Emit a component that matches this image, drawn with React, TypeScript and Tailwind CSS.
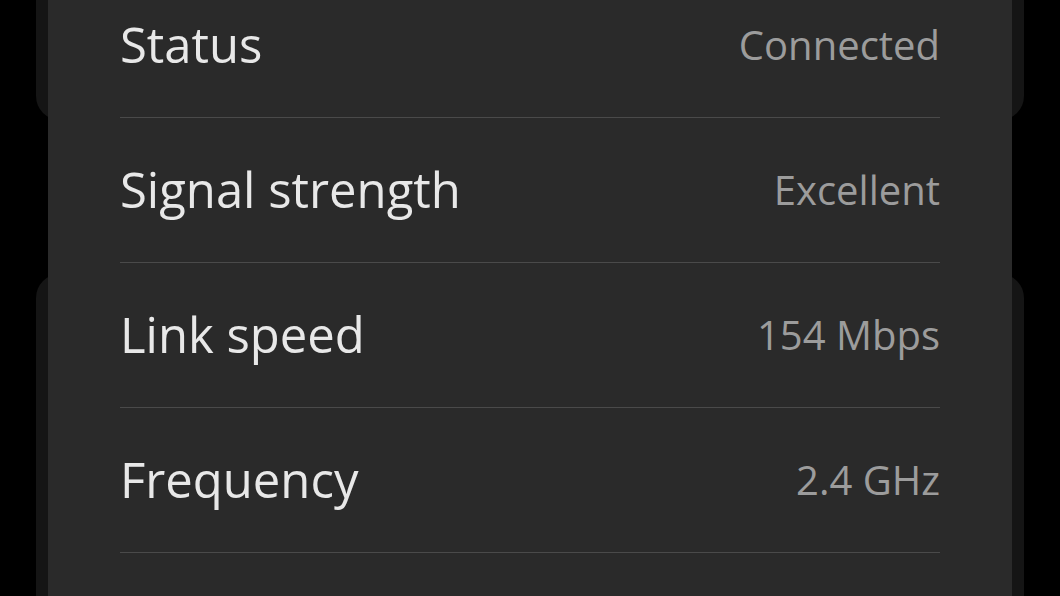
import React from 'react'

const rows = [
  { label: 'Status', value: 'Connected' },
  { label: 'Signal strength', value: 'Excellent' },
  { label: 'Link speed', value: '154 Mbps' },
  { label: 'Frequency', value: '2.4 GHz' },
]

const App = () => {
  return (
    <div className="relative h-[596px] w-[1060px] overflow-hidden bg-black" style={{ fontFamily: '"Open Sans", sans-serif' }}>
      {/* cards behind the sheet */}
      <div className="flex flex-col px-[36px]">
        <div className="-mt-[60px] h-[180px] rounded-[24px] bg-[#151515]" />
        <div className="mt-[154px] h-[400px] rounded-[24px] bg-[#151515]" />
      </div>

      {/* details sheet */}
      <div className="absolute inset-y-0 left-[48px] w-[964px] bg-[#2a2a2a]">
        <div className="-mt-[27px] px-[72px]">
          {rows.map((row) => (
            <div key={row.label} className="flex h-[145px] items-center justify-between border-b border-[#4a4a4a]">
              <span className="text-[49px] text-[#e8e8e8]">{row.label}</span>
              <span className="text-[40px] text-[#9c9c9c]">{row.value}</span>
            </div>
          ))}
        </div>
      </div>
    </div>
  )
}

export default App
